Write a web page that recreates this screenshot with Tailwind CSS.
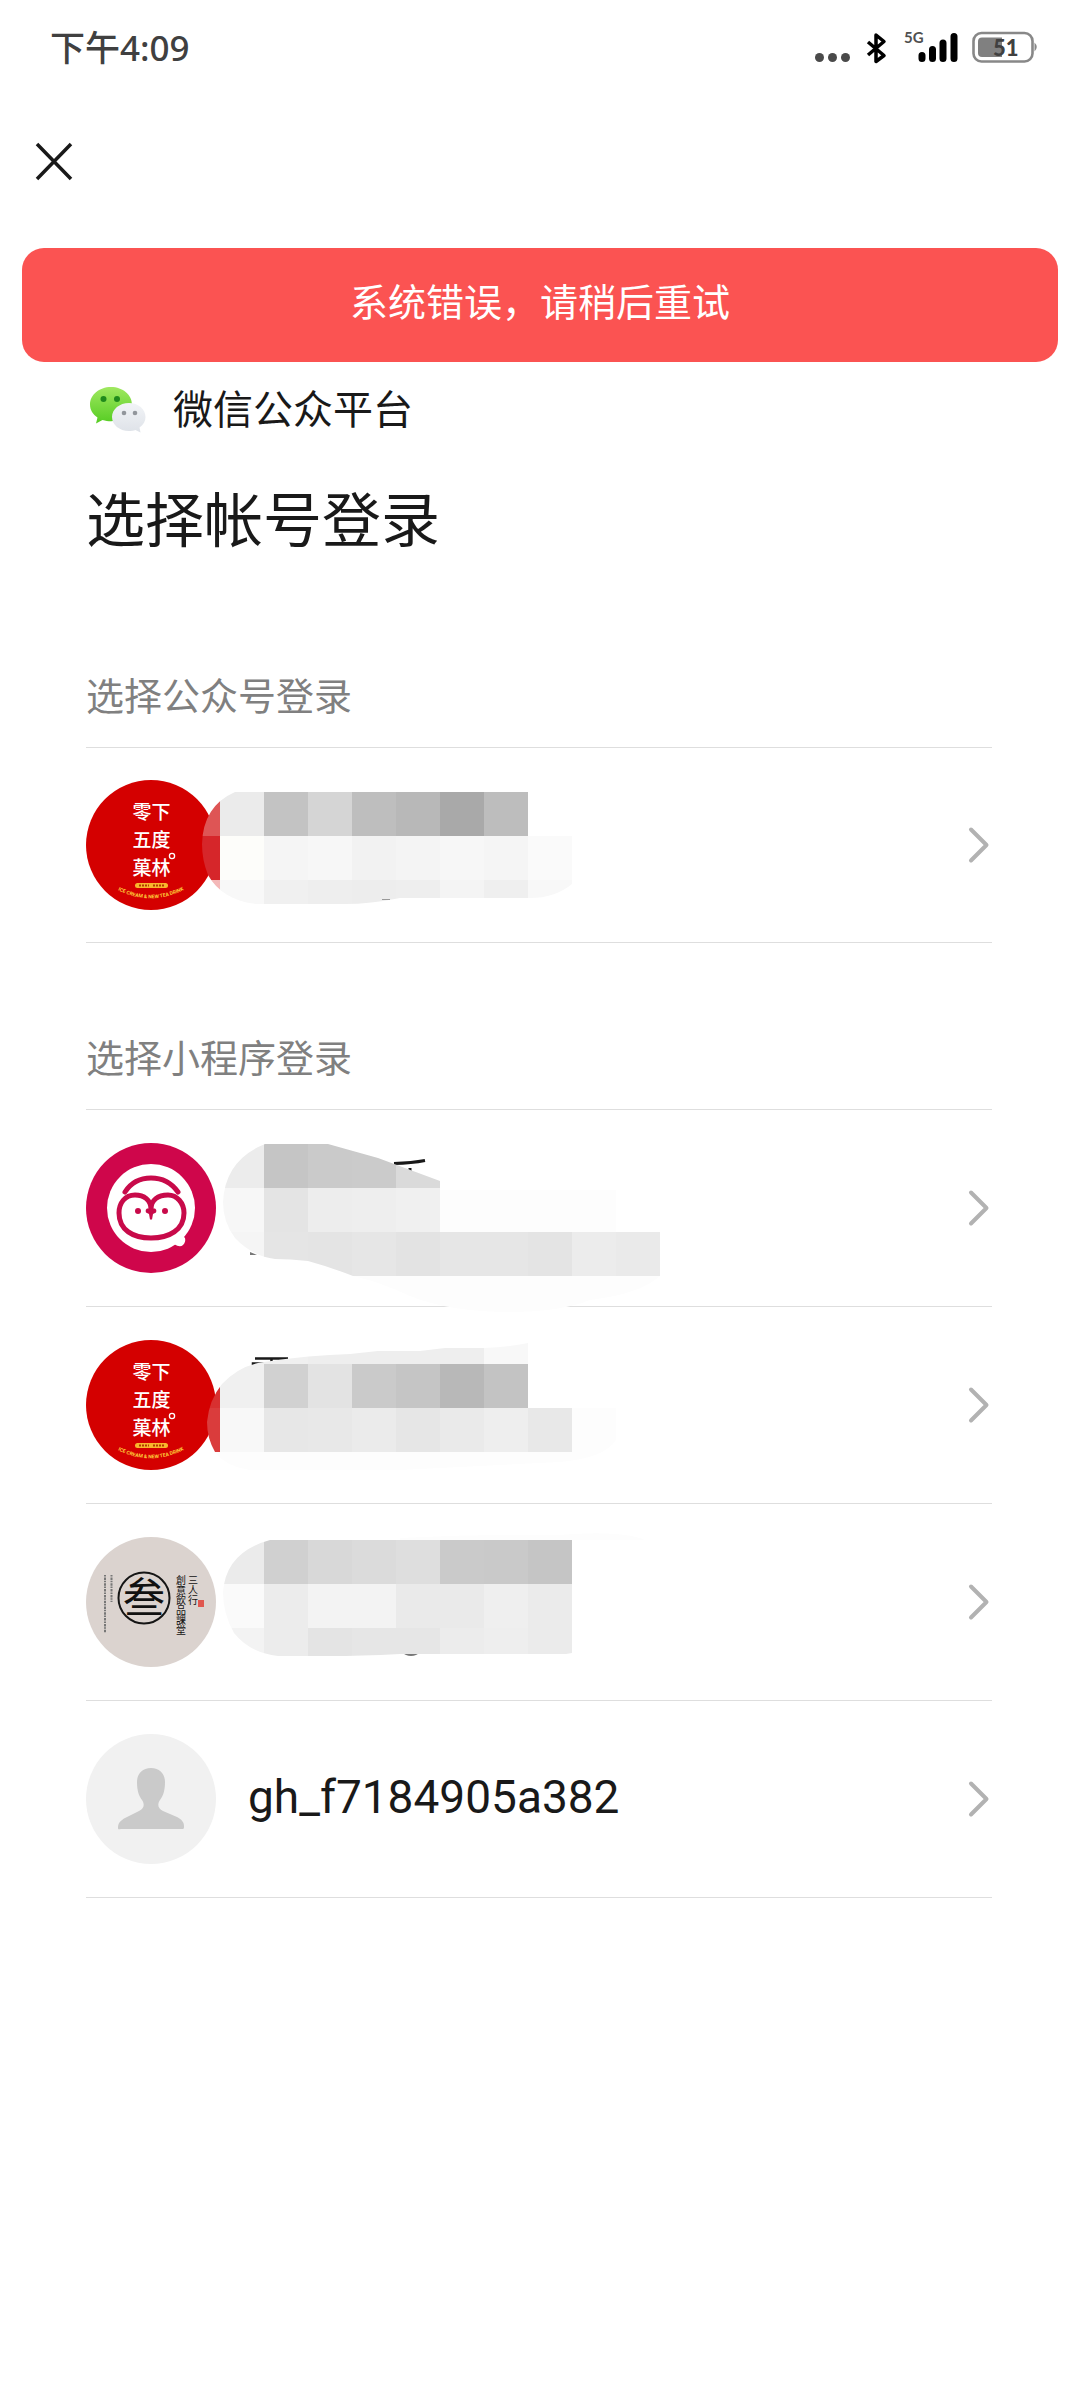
<!DOCTYPE html>
<html lang="zh-CN">
<head>
  <meta charset="UTF-8">
  <title>选择帐号登录</title>
  <meta name="viewport" content="width=device-width, initial-scale=1">
  <script src="https://cdn.jsdelivr.net/npm/@tailwindcss/browser@4"></script>
</head>
<body class="bg-white text-[#191919] min-h-screen font-[Roboto,'Noto_Sans_CJK_SC',sans-serif]">
  <!-- shared drawings -->
  <svg class="hidden">
    <symbol id="chevron" viewBox="0 0 24 40">
      <path d="M3 4.500 18.500 20 3 35.500" fill="none" stroke="#b2b2b2" stroke-width="4" stroke-linecap="round" stroke-linejoin="round"/>
    </symbol>
    <symbol id="redLogo" viewBox="0 0 130 130">
      <circle cx="65" cy="65" r="65" fill="#d40000"/>
      <g fill="#fff" font-family="Noto Sans CJK SC, sans-serif" font-weight="500" font-size="19" text-anchor="middle">
        <text x="56" y="39">零</text><text x="75" y="39">下</text>
        <text x="56" y="67">五</text><text x="75" y="67">度</text>
        <text x="56" y="95">菓</text><text x="75" y="95">林</text>
      </g>
      <circle cx="86" cy="76" r="2.600" fill="none" stroke="#fff" stroke-width="1.300"/>
      <rect x="49" y="103" width="33" height="5" rx="2.500" fill="#f8b62d"/>
      <path d="M53 105.500h10m4 0h12" stroke="#b33a00" stroke-width="2" stroke-dasharray="2 1"/>
      <path id="arc" d="M32 110Q65 127 100 109" fill="none"/>
      <text fill="#ffd23c" font-family="Roboto, sans-serif" font-weight="700" font-size="5"><textPath href="#arc">ICE CREAM &amp; NEW TEA DRINK</textPath></text>
    </symbol>
  </svg>

  <header>
    <div class="flex items-center justify-between h-24 pl-[50px] pr-[43px]">
      <span class="text-[35px] font-medium text-[#404040] font-['Noto_Sans','Noto_Sans_CJK_SC',sans-serif]">下午4:09</span>
      <svg class="w-[224px] h-[40px]" viewBox="813 28 224 40">
        <g fill="#4a4a4a"><circle cx="819.500" cy="57.500" r="4.500"/><circle cx="832.500" cy="57.500" r="4.500"/><circle cx="845.500" cy="57.500" r="4.500"/></g>
        <path d="M868 42 884 55.500 876 61.500V35l8 6.500L868 55" fill="none" stroke="#000" stroke-width="3.500" stroke-linejoin="round"/>
        <text x="904" y="43" font-family="Lato, sans-serif" font-weight="700" font-size="15" fill="#505050">5G</text>
        <g stroke="#000" stroke-width="7" stroke-linecap="round"><path d="M922 55.500v3M932.500 49.500v9M943 43v15.500M954 36.500v22"/></g>
        <rect x="973.500" y="33" width="59" height="28.500" rx="8" fill="none" stroke="#888" stroke-width="2.600"/>
        <path d="M982 37.500h20v19.500h-20a4 4 0 0 1-4-4v-11.500a4 4 0 0 1 4-4z" fill="#808080"/>
        <path d="M1034.500 42.500q4.500 4.500 0 9z" fill="#888"/>
        <text x="993" y="56" font-family="Lato, sans-serif" font-weight="900" font-size="22" fill="#404040">51</text>
      </svg>
    </div>
    <button type="button" aria-label="关闭" class="block ml-[31px] mt-[41px] size-[48px]">
      <svg viewBox="0 0 48 48"><path d="M6 7 40 42M40 7 6 42" stroke="#191919" stroke-width="3.500"/></svg>
    </button>
  </header>

  <div role="alert" class="mx-[22px] mt-[63px] h-[114px] rounded-[22px] bg-[#fb5352] text-white text-[38px] flex items-center justify-center pb-1">系统错误，请稍后重试</div>

  <main class="pl-[86px] pr-[88px]">
    <div class="flex items-center gap-[27px] h-[60px] mt-[19px]">
      <svg class="w-[60px] h-[52px]" viewBox="0 0 60 52">
        <defs>
          <linearGradient id="green" x1="0" y1="0" x2="0" y2="1"><stop offset="0" stop-color="#a0e860"/><stop offset="1" stop-color="#55cc22"/></linearGradient>
          <linearGradient id="grey" x1="0" y1="0" x2="0" y2="1"><stop offset="0" stop-color="#f2f4f7"/><stop offset="1" stop-color="#dee2e8"/></linearGradient>
        </defs>
        <path d="M25 2C13 2 4 10 4 19.500c0 5.500 3 10 7.500 13L10 38.500l6.500-3.500c3 1 5.500 1.200 8.500 1.200C37 36.200 46 29 46 19.500S37 2 25 2z" fill="url(#green)"/>
        <path d="M43 18c-9.500 0-17 6.300-17 14s7.500 14 17 14c2.500 0 4.500-.4 6.500-1l5 2.500-1-5c4-2.700 6-6.300 6-10.500 0-7.700-7-14-16.500-14z" fill="url(#grey)"/>
        <circle cx="17.500" cy="14" r="3" fill="#208a1c"/><circle cx="31" cy="14" r="3" fill="#208a1c"/>
        <circle cx="38" cy="28" r="2.300" fill="#92969c"/><circle cx="49" cy="28" r="2.300" fill="#92969c"/>
      </svg>
      <span class="text-[40px] leading-[60px]">微信公众平台</span>
    </div>
    <h1 class="text-[59px] leading-[88px] mt-[37px]">选择帐号登录</h1>

    <section class="mt-[103px]">
      <h2 class="text-[38px] leading-[56px] pb-[22px] text-[#808080] border-b border-[#dedede]">选择公众号登录</h2>
      <ul>
        <li class="relative border-b border-[#dedede]">
          <button type="button" aria-label="零下五度菓林" class="flex items-center justify-between w-full h-[194px]">
            <svg class="size-[130px]"><use href="#redLogo"/></svg>
            <svg class="w-[24px] h-[40px]"><use href="#chevron"/></svg>
          </button>
          <!-- hidden name, official account -->
          <svg class="absolute top-0 left-0 w-[600px] h-[196px] pointer-events-none" viewBox="86 748 600 196" shape-rendering="crispEdges">
            <clipPath id="mask1"><path d="M235 792H528V836H572V884Q555 898 530 898H400Q370 904 345 904H256Q222 900 208 875 202 860 202 844 203 806 235 792z"/></clipPath>
            <g clip-path="url(#mask1)">
              <path fill="#de5555" d="M176 792h44v44h-44z"/><path fill="#ebebeb" d="M220 792h44v44h-44z"/><path fill="#c3c3c3" d="M264 792h44v44h-44z"/><path fill="#d5d5d5" d="M308 792h44v44h-44z"/><path fill="#bebebe" d="M352 792h44v44h-44z"/><path fill="#b8b8b8" d="M396 792h44v44h-44z"/><path fill="#a9a9a9" d="M440 792h44v44h-44z"/><path fill="#bdbdbd" d="M484 792h44v44h-44z"/>
              <path fill="#d6262a" d="M176 836h44v44h-44z"/><path fill="#fdfdfa" d="M220 836h44v44h-44z"/><path fill="#f5f5f5" d="M264 836h44v44h-44z"/><path fill="#f7f7f7" d="M308 836h44v44h-44z"/><path fill="#f2f2f2" d="M352 836h44v44h-44z"/><path fill="#f4f4f4" d="M396 836h44v44h-44z"/><path fill="#f7f7f7" d="M440 836h44v44h-44z"/><path fill="#f5f5f5" d="M484 836h44v44h-44z"/><path fill="#fafafa" d="M528 836h44v44h-44z"/>
              <path fill="#f4b8b8" d="M176 880h44v44h-44z"/><path fill="#f8f8f8" d="M220 880h44v44h-44z"/><path fill="#f0f0f0" d="M264 880h44v44h-44z"/><path fill="#eee" d="M308 880h44v44h-44z"/><path fill="#ededed" d="M352 880h44v44h-44z"/><path fill="#eee" d="M396 880h44v44h-44z"/><path fill="#f4f4f4" d="M440 880h44v44h-44z"/><path fill="#efefef" d="M484 880h44v44h-44z"/><path fill="#f8f8f8" d="M528 880h44v44h-44z"/>
            </g>
            <path d="M382 899.500h8" stroke="#999"/>
          </svg>
        </li>
      </ul>
    </section>

    <section class="mt-[88px]">
      <h2 class="text-[38px] leading-[56px] pb-[22px] text-[#808080] border-b border-[#dedede]">选择小程序登录</h2>
      <ul>
        <li class="relative border-b border-[#dedede]">
          <button type="button" aria-label="小程序" class="flex items-center justify-between w-full h-[196px]">
            <svg class="size-[130px]" viewBox="0 0 130 130">
              <circle cx="65" cy="65" r="65" fill="#cf064b"/>
              <circle cx="65" cy="65" r="44" fill="#fff"/>
              <path d="M88 101q6 4 9 1 3-3 2-7l-4-4z" fill="#fff"/>
              <g fill="none" stroke="#c80a4a" stroke-width="5" stroke-linecap="round">
                <path d="M39 49Q48 35 65 35T92 49"/>
                <path d="M65 66C65 57 58 52 49 52 39 52 33 60 33 70 33 87 47 95 65 95S98 87 98 70C98 60 91 52 82 52 72 52 65 57 65 66z"/>
              </g>
              <g fill="#c80a4a"><circle cx="52" cy="68" r="3"/><circle cx="79" cy="68" r="3"/><path d="M61 65.500h8q2 1 1 4l-3 1.500-1 5.500h-2l-1-5.500-3-1.500q-1-3 1-4z"/></g>
            </svg>
            <svg class="w-[24px] h-[40px]"><use href="#chevron"/></svg>
          </button>
          <!-- hidden name, first mini program -->
          <svg class="absolute top-0 left-0 w-[600px] h-[202px] pointer-events-none" viewBox="86 1110 600 202">
            <path d="M394 1163.500Q412 1163 425 1160.500" fill="none" stroke="#191919" stroke-width="3"/>
            <path d="M410 1168v3" stroke="#191919" stroke-width="3"/>
            <path d="M250 1252l7 3h-7z" fill="#777"/>
            <path d="M353 1276H660Q640 1294 590 1300 560 1312 510 1312 450 1312 410 1296 380 1282 353 1276zM440 1190H616V1232H440z" fill="#fdfdfd"/>
            <clipPath id="mask2"><path d="M265 1144H328L378 1158 440 1181V1232H660V1276H353Q330 1267 308 1261 290 1259 275 1259 252 1256 235 1238 223 1222 223 1202 225 1160 265 1144z"/></clipPath>
            <g clip-path="url(#mask2)" shape-rendering="crispEdges">
              <path fill="#ececec" d="M220 1144h44v44h-44z"/><path fill="#c5c5c5" d="M264 1144h44v44h-44z"/><path fill="#cacaca" d="M308 1144h44v44h-44z"/><path fill="#cbcbcb" d="M352 1144h44v44h-44z"/><path fill="#dadada" d="M396 1144h44v44h-44z"/>
              <path fill="#f7f7f7" d="M220 1188h44v44h-44z"/><path fill="#e4e4e4" d="M264 1188h44v44h-44z"/><path fill="#ededed" d="M308 1188h44v44h-44z"/><path fill="#eee" d="M352 1188h44v44h-44z"/><path fill="#f0f0f0" d="M396 1188h44v44h-44z"/>
              <path fill="#f5f5f5" d="M220 1232h44v44h-44z"/><path fill="#e5e5e5" d="M264 1232h44v44h-44z"/><path fill="#e4e4e4" d="M308 1232h44v44h-44z"/><path fill="#e6e6e6" d="M352 1232h44v44h-44z"/><path fill="#e3e3e3" d="M396 1232h44v44h-44z"/><path fill="#e6e6e6" d="M440 1232h88v44h-88z"/><path fill="#e4e4e4" d="M528 1232h44v44h-44z"/><path fill="#ececec" d="M572 1232h44v44h-44z"/><path fill="#eaeaea" d="M616 1232h44v44h-44z"/>
            </g>
          </svg>
        </li>
        <li class="relative border-b border-[#dedede]">
          <button type="button" aria-label="零下五度菓林" class="flex items-center justify-between w-full h-[196px]">
            <svg class="size-[130px]"><use href="#redLogo"/></svg>
            <svg class="w-[24px] h-[40px]"><use href="#chevron"/></svg>
          </button>
          <!-- hidden name, second mini program -->
          <svg class="absolute top-0 left-0 w-[600px] h-[196px] pointer-events-none" viewBox="86 1307 600 196">
            <path d="M255 1358.500h33M253 1365v-1.500h35M271.500 1358v8" fill="none" stroke="#191919" stroke-width="2.500"/>
            <clipPath id="mask3"><path d="M528 1343V1408H616V1440Q605 1458 560 1462L400 1470H250Q225 1466 215 1452 207 1438 207 1422 209 1400 222 1384 240 1365 264 1362 310 1355 350 1354L378 1351H420L445 1348H484Q508 1347 528 1343z"/></clipPath>
            <g clip-path="url(#mask3)" shape-rendering="crispEdges">
              <path fill="#f0f0f0" d="M220 1320h88v44h-88z"/><path fill="#eee" d="M308 1320h176v44h-176z"/><path fill="#f8f8f8" d="M484 1320h44v44h-44z"/>
              <path fill="#d83030" d="M176 1364h44v44h-44z"/><path fill="#f0f0f0" d="M220 1364h44v44h-44z"/><path fill="#d1d1d1" d="M264 1364h44v44h-44z"/><path fill="#e3e3e3" d="M308 1364h44v44h-44z"/><path fill="#cacaca" d="M352 1364h44v44h-44z"/><path fill="#c5c5c5" d="M396 1364h44v44h-44z"/><path fill="#b8b8b8" d="M440 1364h44v44h-44z"/><path fill="#c3c3c3" d="M484 1364h44v44h-44z"/>
              <path fill="#da3c3c" d="M176 1408h44v44h-44z"/><path fill="#f8f8f8" d="M220 1408h44v44h-44z"/><path fill="#e7e7e7" d="M264 1408h44v44h-44z"/><path fill="#e8e8e8" d="M308 1408h44v44h-44z"/><path fill="#ebebeb" d="M352 1408h44v44h-44z"/><path fill="#e6e6e6" d="M396 1408h44v44h-44z"/><path fill="#eaeaea" d="M440 1408h44v44h-44z"/><path fill="#eee" d="M484 1408h44v44h-44z"/><path fill="#e8e8e8" d="M528 1408h44v44h-44z"/><path fill="#fdfdfd" d="M572 1408h44v44h-44z"/>
              <path fill="#fdfdfd" d="M176 1452h440v44h-440z"/>
            </g>
          </svg>
        </li>
        <li class="relative border-b border-[#dedede]">
          <button type="button" aria-label="三人行創意飲品課堂" class="flex items-center justify-between w-full h-[196px]">
            <svg class="size-[130px]" viewBox="0 0 130 130">
              <circle cx="65" cy="65" r="65" fill="#dbd3cf"/>
              <circle cx="58" cy="61" r="25.500" fill="none" stroke="#151515" stroke-width="2"/>
              <g fill="#111" font-family="Noto Sans CJK TC, serif">
                <text x="58" y="76" font-size="42" text-anchor="middle">叁</text>
                <text x="107" y="38" font-size="10" class="[writing-mode:vertical-rl]">三人行</text>
                <text x="95" y="38" font-size="10" class="[writing-mode:vertical-rl]">創意飲品課堂</text>
              </g>
              <rect x="112" y="63" width="6" height="7" fill="#e0574f"/>
              <g stroke="#777" stroke-width="2" stroke-dasharray="1.500 1 2.500 .8"><path d="M19 38v58M25.500 38v27"/></g>
            </svg>
            <svg class="w-[24px] h-[40px]"><use href="#chevron"/></svg>
          </button>
          <!-- hidden name, third mini program -->
          <svg class="absolute top-0 left-0 w-[600px] h-[196px] pointer-events-none" viewBox="86 1504 600 196">
            <ellipse cx="411" cy="1653" rx="7" ry="3" fill="#777"/>
            <path d="M400 1538Q480 1534 560 1535 620 1530 645 1540H400z" fill="#fdfdfd"/>
            <clipPath id="mask4"><path d="M270 1540H572V1653L566 1654H400Q360 1656 330 1656H278Q250 1653 234 1633 223 1614 223 1592 226 1552 270 1540z"/></clipPath>
            <g clip-path="url(#mask4)" shape-rendering="crispEdges">
              <path fill="#ebebeb" d="M220 1540h44v44h-44z"/><path fill="#d0d0d0" d="M264 1540h44v44h-44z"/><path fill="#d8d8d8" d="M308 1540h44v44h-44z"/><path fill="#dbdbdb" d="M352 1540h44v44h-44z"/><path fill="#dedede" d="M396 1540h44v44h-44z"/><path fill="#cacaca" d="M440 1540h44v44h-44z"/><path fill="#c9c9c9" d="M484 1540h44v44h-44z"/><path fill="#c5c5c5" d="M528 1540h44v44h-44z"/>
              <path fill="#fafafa" d="M220 1584h44v44h-44z"/><path fill="#ececec" d="M264 1584h44v44h-44z"/><path fill="#f3f3f3" d="M308 1584h88v44h-88z"/><path fill="#eaeaea" d="M396 1584h88v44h-88z"/><path fill="#efefef" d="M484 1584h44v44h-44z"/><path fill="#ebebeb" d="M528 1584h44v44h-44z"/>
              <path fill="#f3f3f3" d="M220 1628h44v44h-44z"/><path fill="#ececec" d="M264 1628h44v44h-44z"/><path fill="#e4e4e4" d="M308 1628h44v44h-44z"/><path fill="#e6e6e6" d="M352 1628h88v44h-88z"/><path fill="#ececec" d="M440 1628h44v44h-44z"/><path fill="#eee" d="M484 1628h44v44h-44z"/><path fill="#ebebeb" d="M528 1628h44v44h-44z"/>
            </g>
          </svg>
        </li>
        <li class="border-b border-[#dedede]">
          <button type="button" class="flex items-center w-full h-[196px]">
            <svg class="size-[130px]" viewBox="0 0 130 130">
              <circle cx="65" cy="65" r="65" fill="#f1f1f1"/>
              <path d="M65 34c-9 0-14 6-14 14 0 9 2 14 5 18 3 5 2 8-3 11l-14 7c-5 3-7 5-7 10 0 2 1 1 3 1h60c3 0 3 0 3-3 0-4-2-6-7-9l-14-6c-5-3-6-6-3-11 3-4 5-9 5-18 0-8-5-14-14-14z" fill="#cacaca"/>
            </svg>
            <span class="flex-1 ml-8 pb-1 text-left text-[46px]">gh_f7184905a382</span>
            <svg class="w-[24px] h-[40px]"><use href="#chevron"/></svg>
          </button>
        </li>
      </ul>
    </section>
  </main>
</body>
</html>
